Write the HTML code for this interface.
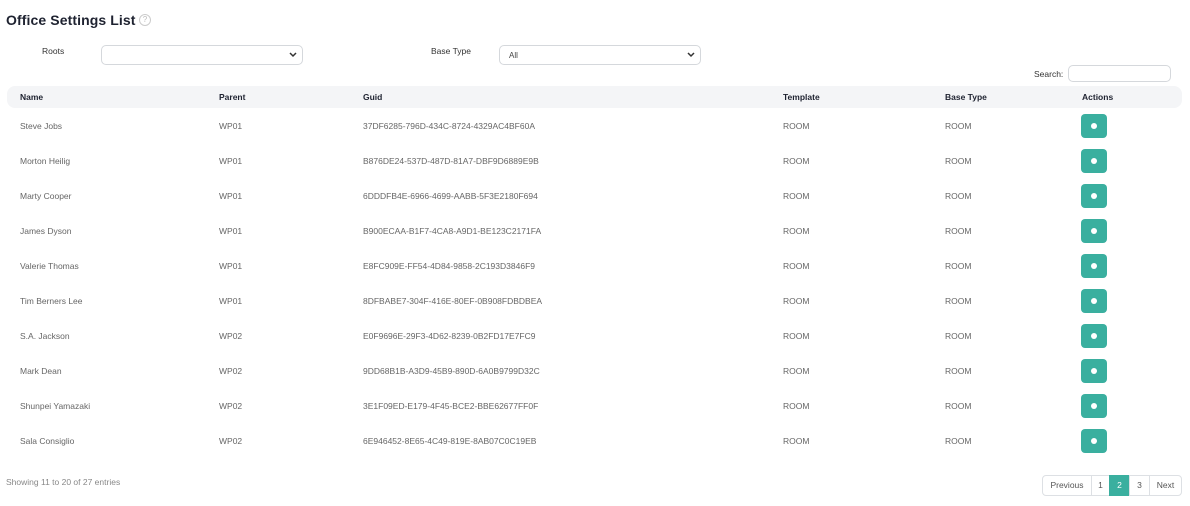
<!DOCTYPE html>
<html><head><meta charset="utf-8"><style>
*{margin:0;padding:0;box-sizing:border-box}
body{width:1190px;height:506px;background:#fff;font-family:"Liberation Sans",sans-serif;color:#555;position:relative;overflow:hidden}
.a{position:absolute;white-space:nowrap}
h1{position:absolute;left:6px;top:12px;font-size:14px;color:#1e2230;font-weight:bold;letter-spacing:0.1px}
.q{position:absolute;left:139px;top:14px;width:12px;height:12px;border:1px solid #ccc;border-radius:50%;font-size:8px;color:#bbb;text-align:center;line-height:10px}
.sel{position:absolute;height:20px;border:1px solid #d5d8dc;border-radius:5px;font-size:8px;color:#444;padding:5px 9px}
.sel svg{position:absolute;right:5px;top:6px}
.hdr{position:absolute;left:7px;top:86px;width:1175px;height:22px;background:#f4f5f7;border-radius:8px}
.th{font-size:8.5px;font-weight:bold;color:#1e2230}
.td{font-size:8.5px;color:#666}
.btn{position:absolute;left:1081px;width:26px;height:24px;background:#3aaf9f;border-radius:4px}
.btn:after{content:"";position:absolute;left:10px;top:9px;width:6px;height:6px;border-radius:50%;background:#fff}
.pg{position:absolute;top:475px;height:21px;border:1px solid #dde0e4;font-size:8.5px;color:#555;text-align:center;line-height:19px}
</style></head><body>
<h1>Office Settings List</h1><div class="q">?</div>
<div class="a td" style="left:42px;top:46px;color:#333">Roots</div>
<div class="sel" style="left:101px;top:45px;width:202px"><svg width="8" height="6"><path d="M1 1l3 3 3-3" stroke="#333" stroke-width="1.5" fill="none"/></svg></div>
<div class="a td" style="left:431px;top:46px;color:#333">Base Type</div>
<div class="sel" style="left:499px;top:45px;width:202px">All<svg width="8" height="6"><path d="M1 1l3 3 3-3" stroke="#333" stroke-width="1.5" fill="none"/></svg></div>
<div class="a td" style="left:1034px;top:69px;color:#333">Search:</div>
<div class="sel" style="left:1068px;top:65px;width:103px;height:17px"></div>
<div class="hdr"></div>
<div class="a th" style="left:20px;top:92px">Name</div>
<div class="a th" style="left:219px;top:92px">Parent</div>
<div class="a th" style="left:363px;top:92px">Guid</div>
<div class="a th" style="left:783px;top:92px">Template</div>
<div class="a th" style="left:945px;top:92px">Base Type</div>
<div class="a th" style="left:1082px;top:92px">Actions</div>
<div id="rows"></div>
<script>
var d=[["Steve Jobs","WP01","37DF6285-796D-434C-8724-4329AC4BF60A"],["Morton Heilig","WP01","B876DE24-537D-487D-81A7-DBF9D6889E9B"],["Marty Cooper","WP01","6DDDFB4E-6966-4699-AABB-5F3E2180F694"],["James Dyson","WP01","B900ECAA-B1F7-4CA8-A9D1-BE123C2171FA"],["Valerie Thomas","WP01","E8FC909E-FF54-4D84-9858-2C193D3846F9"],["Tim Berners Lee","WP01","8DFBABE7-304F-416E-80EF-0B908FDBDBEA"],["S.A. Jackson","WP02","E0F9696E-29F3-4D62-8239-0B2FD17E7FC9"],["Mark Dean","WP02","9DD68B1B-A3D9-45B9-890D-6A0B9799D32C"],["Shunpei Yamazaki","WP02","3E1F09ED-E179-4F45-BCE2-BBE62677FF0F"],["Sala Consiglio","WP02","6E946452-8E65-4C49-819E-8AB07C0C19EB"]];
var h="";d.forEach(function(r,i){var y=126+35*i;
h+='<div class="a td" style="left:20px;top:'+(y-5)+'px">'+r[0]+'</div><div class="a td" style="left:219px;top:'+(y-5)+'px">'+r[1]+'</div><div class="a td" style="left:363px;top:'+(y-5)+'px">'+r[2]+'</div><div class="a td" style="left:783px;top:'+(y-5)+'px">ROOM</div><div class="a td" style="left:945px;top:'+(y-5)+'px">ROOM</div><div class="btn" style="top:'+(y-12)+'px"></div>';});
document.getElementById("rows").innerHTML=h;
</script>
<div class="a td" style="left:6px;top:477px;color:#888">Showing 11 to 20 of 27 entries</div>
<div class="pg" style="left:1042px;width:50px;border-radius:4px 0 0 4px">Previous</div>
<div class="pg" style="left:1091px;width:19px">1</div>
<div class="pg" style="left:1109px;width:21px;background:#3aaf9f;color:#fff;border-color:#3aaf9f">2</div>
<div class="pg" style="left:1129px;width:21px">3</div>
<div class="pg" style="left:1149px;width:33px;border-radius:0 4px 4px 0">Next</div>
</body></html>
